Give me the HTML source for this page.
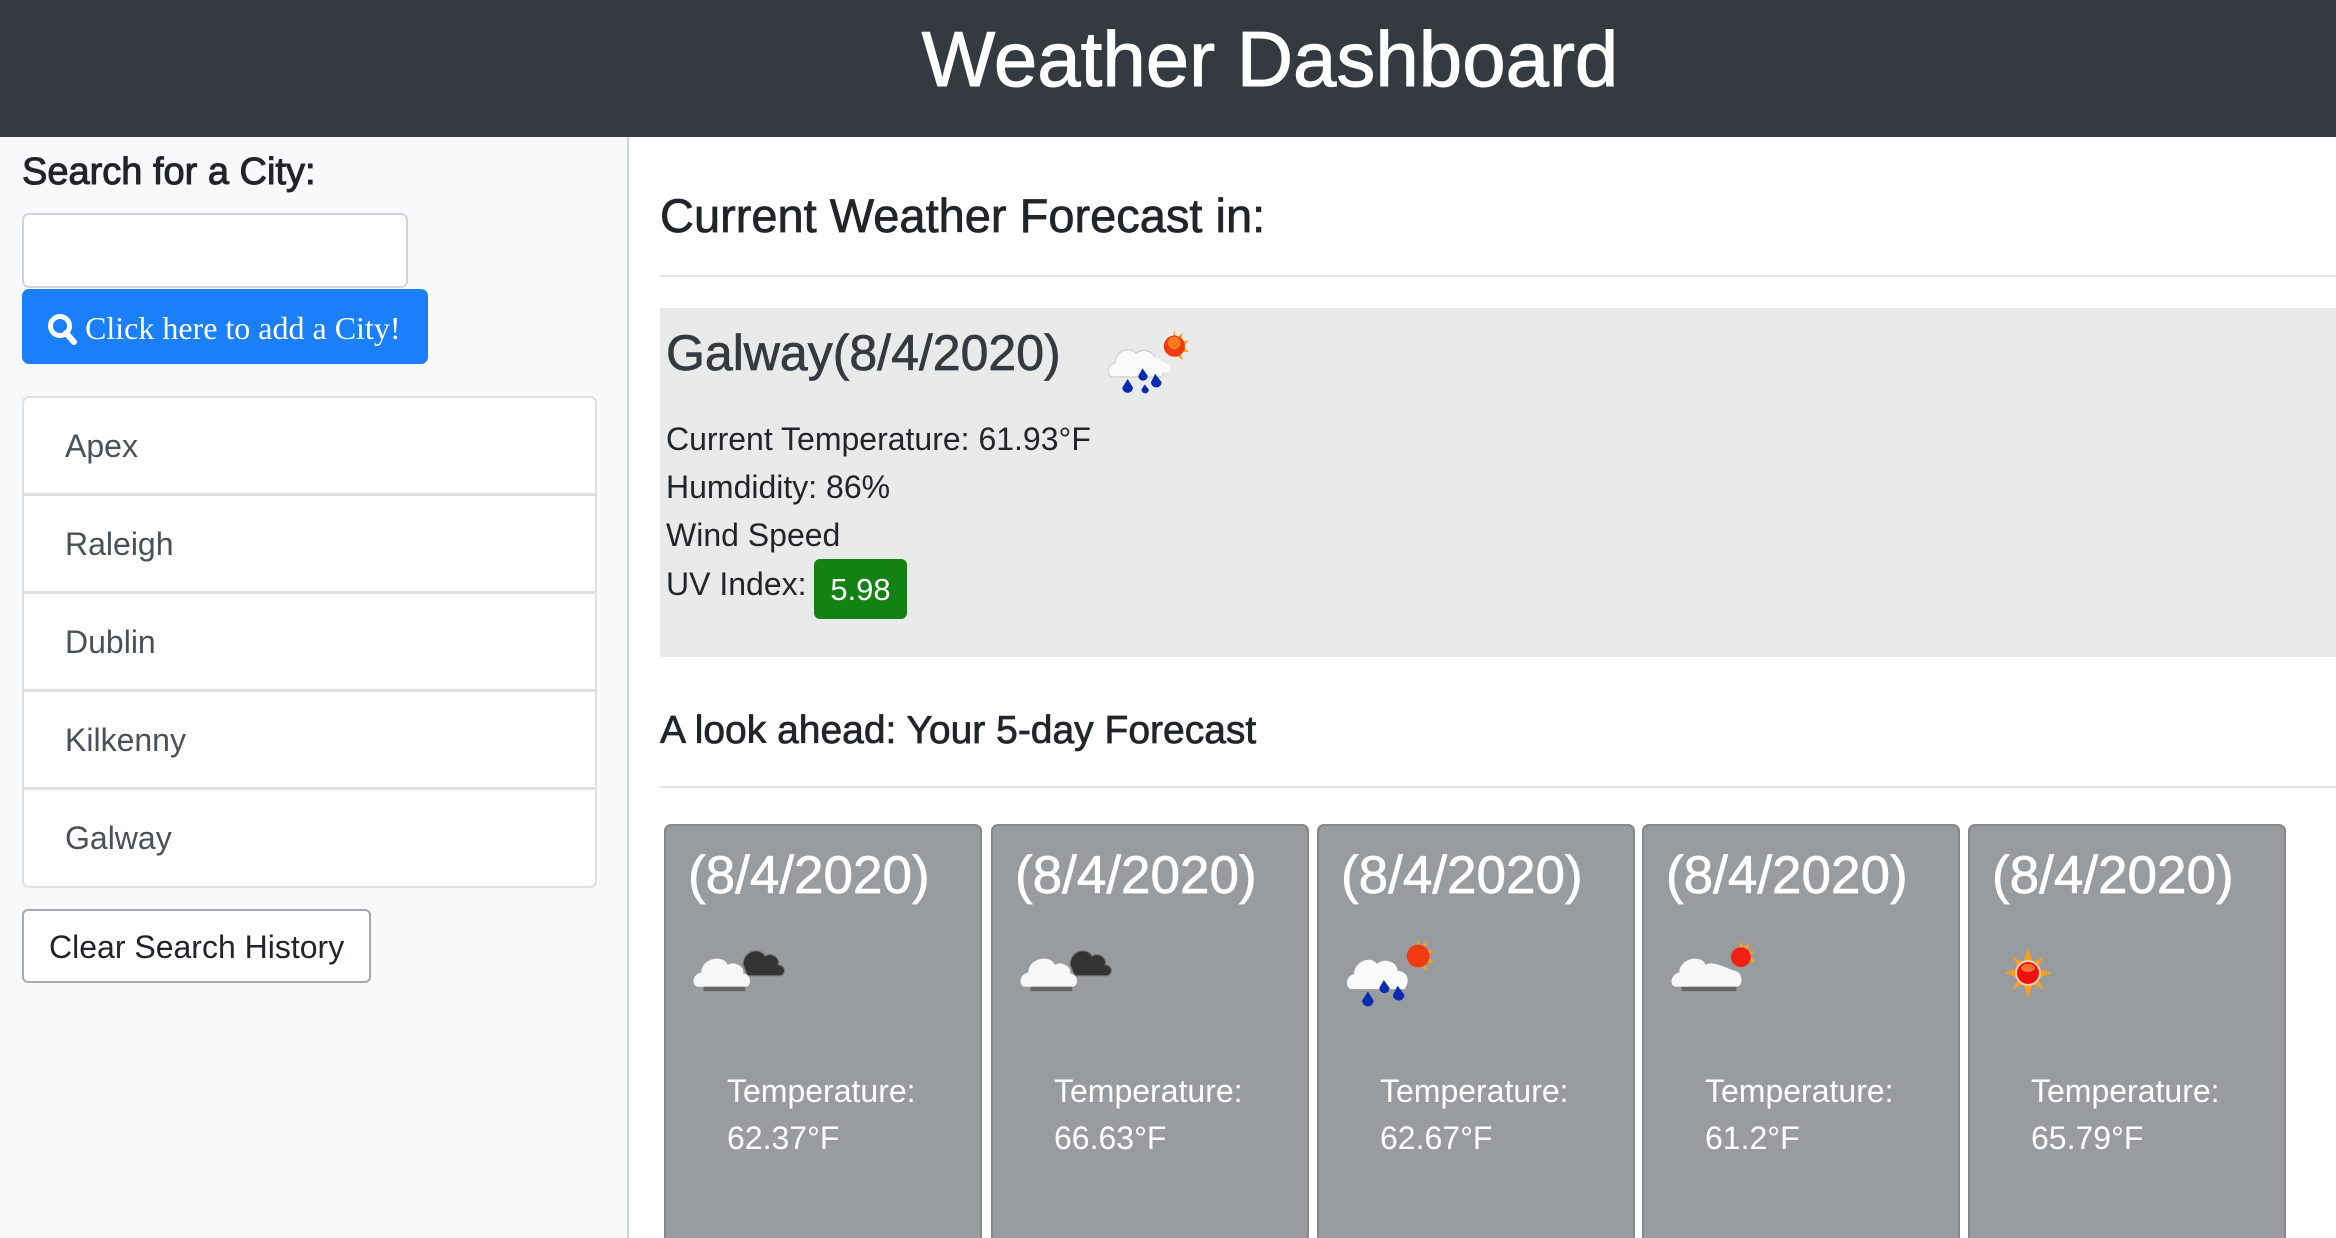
<!DOCTYPE html>
<html style="overflow:hidden;width:2336px;height:1238px"><head><meta charset="utf-8"><style>
*{box-sizing:border-box;margin:0;padding:0}
body{width:2336px;height:1238px;overflow:hidden;background:#fff;font-family:"Liberation Sans",sans-serif;color:#212529;position:relative}
.a{position:absolute;white-space:nowrap}
.m{-webkit-text-stroke:0.7px currentColor}
#hdr{left:0;top:0;width:2336px;height:137px;background:#343a40}
#side{left:0;top:137px;width:629px;height:1101px;background:#f8f9fa;border-right:2px solid #d0d2d4}
.li{position:absolute;left:22px;width:575px;height:99px;background:#fff;border:2px solid #dfe0e1;font-size:32px;color:#495057;padding-left:41px;line-height:97px}
.card{position:absolute;top:824px;width:318px;height:420px;background:#999c9f;border:2px solid #85888b;border-radius:7px;color:#fff}
.card .d{position:absolute;left:22px;top:19px;font-size:53px}
.card .i{position:absolute;left:26px;top:108px}
.card .t{position:absolute;left:61px;top:242px;font-size:32px;line-height:47px}
</style></head><body>
<div id="hdr" class="a"></div>
<div class="a m" style="left:0;width:2540px;top:14px;text-align:center;font-size:78px;color:#fff;-webkit-text-stroke:1px #fff">Weather Dashboard</div>
<div id="side" class="a"></div>
<div class="a m" style="left:22px;top:151px;font-size:38px;color:#212529;-webkit-text-stroke:1px #212529">Search for a City:</div>
<div class="a" style="left:22px;top:213px;width:386px;height:75px;background:#fff;border:2px solid #ced4da;border-radius:7px"></div>
<div class="a" style="left:22px;top:289px;width:406px;height:75px;background:#1a7ff8;border-radius:7px"></div>
<svg class="a" style="left:47px;top:313px" width="30" height="34" viewBox="0 0 30 34"><circle cx="13" cy="13" r="9.5" fill="none" stroke="#fff" stroke-width="5"/><path d="M19 20 L27 29" stroke="#fff" stroke-width="6" stroke-linecap="round"/></svg>
<div class="a" style="left:85px;top:310px;font-family:'Liberation Serif',serif;font-size:32px;color:#fff">Click here to add a City!</div>
<div class="li" style="top:396px;border-radius:7px 7px 0 0">Apex</div>
<div class="li" style="top:494px">Raleigh</div>
<div class="li" style="top:592px">Dublin</div>
<div class="li" style="top:690px">Kilkenny</div>
<div class="li" style="top:788px;border-radius:0 0 7px 7px;height:100px">Galway</div>
<div class="a" style="left:22px;top:909px;width:349px;height:74px;background:#fff;border:2px solid #a8abae;border-radius:6px;font-size:32px;line-height:72px;padding-left:25px">Clear Search History</div>

<div class="a m" style="left:660px;top:188px;font-size:47px;color:#212529">Current Weather Forecast in:</div>
<div class="a" style="left:660px;top:275px;width:1676px;height:2px;background:#e3e4e5"></div>
<div class="a" style="left:660px;top:308px;width:1676px;height:349px;background:#e9eaea"></div>
<div class="a m" style="left:666px;top:324px;font-size:50px;color:#343a40">Galway(8/4/2020)</div>
<svg class="a" style="left:1106px;top:326px" width="90" height="70" viewBox="0 0 84 66">
<g><path d="M64 4 L66 12 L72 6 L70 14 L78 14 L71 19 L78 24 L70 25 L72 32 L60 24Z" fill="#f8a020"/><circle cx="64" cy="19" r="10" fill="#f23a10"/><circle cx="64" cy="16" r="6" fill="#f87a20"/></g>
<path d="M6 48 C0 48 0 36 8 35 C8 24 22 18 28 26 C34 20 46 24 46 32 C54 32 58 40 52 48Z" fill="#fafafa" stroke="#ccc"/>
<path d="M36 44 C30 44 30 34 38 34 C40 28 50 28 52 34 C60 34 62 44 56 44Z" fill="#fafafa"/>
<g fill="#0a2bb0"><path d="M20 50 l-5 8 a5 5 0 1 0 10 0z"/><path d="M34 40 l-4 7 a4.5 4.5 0 1 0 9 0z"/><path d="M46 45 l-4 8 a5 5 0 1 0 10 0z"/><path d="M36 55 l-3 5 a3.5 3.5 0 1 0 7 0z"/></g>
</svg>
<div class="a" style="left:666px;top:415px;font-size:32px;line-height:48px;color:#212529">Current Temperature: 61.93°F<br>Humdidity: 86%<br>Wind Speed</div>
<div class="a" style="left:666px;top:566px;font-size:32px;color:#212529">UV Index:</div>
<div class="a" style="left:814px;top:559px;width:93px;height:60px;background:#138113;border-radius:6px;color:#fff;font-size:31px;text-align:center;line-height:62px">5.98</div>
<div class="a m" style="left:660px;top:709px;font-size:39px;color:#212529">A look ahead: Your 5-day Forecast</div>
<div class="a" style="left:660px;top:786px;width:1676px;height:2px;background:#e3e4e5"></div>

<div class="card" style="left:664px"><div class="d m">(8/4/2020)</div>
<svg class="i" width="100" height="66" viewBox="0 0 90 60"><path d="M46 28 C46 14 62 12 66 20 C72 16 80 22 78 28 C84 28 86 36 80 38 L50 38Z" fill="#333" stroke="#777"/><path d="M6 48 C-2 48 0 36 8 35 C8 22 28 18 32 28 C38 24 48 30 46 36 C54 36 54 48 48 48Z" fill="#f7f7f7"/><rect x="10" y="48" width="38" height="4" fill="#666"/></svg>
<div class="t">Temperature:<br>62.37°F</div></div>
<div class="card" style="left:991px"><div class="d m">(8/4/2020)</div>
<svg class="i" width="100" height="66" viewBox="0 0 90 60"><path d="M46 28 C46 14 62 12 66 20 C72 16 80 22 78 28 C84 28 86 36 80 38 L50 38Z" fill="#333" stroke="#777"/><path d="M6 48 C-2 48 0 36 8 35 C8 22 28 18 32 28 C38 24 48 30 46 36 C54 36 54 48 48 48Z" fill="#f7f7f7"/><rect x="10" y="48" width="38" height="4" fill="#666"/></svg>
<div class="t">Temperature:<br>66.63°F</div></div>
<div class="card" style="left:1317px"><div class="d m">(8/4/2020)</div>
<svg class="i" width="96" height="76" viewBox="0 0 84 66"><path d="M64 4 L66 12 L72 6 L70 14 L78 14 L71 19 L78 24 L70 25 L72 32 L60 24Z" fill="#f8a020"/><circle cx="64" cy="19" r="10" fill="#f23a10"/><path d="M6 48 C0 48 0 36 8 35 C8 24 22 18 28 26 C34 20 46 24 46 32 C54 32 58 40 52 48Z" fill="#fafafa"/><g fill="#0a2bb0"><path d="M20 50 l-5 8 a5 5 0 1 0 10 0z"/><path d="M34 40 l-4 7 a4.5 4.5 0 1 0 9 0z"/><path d="M46 45 l-4 8 a5 5 0 1 0 10 0z"/></g></svg>
<div class="t">Temperature:<br>62.67°F</div></div>
<div class="card" style="left:1642px"><div class="d m">(8/4/2020)</div>
<svg class="i" width="100" height="66" viewBox="0 0 90 60"><path d="M64 6 L66 13 L72 8 L70 15 L77 16 L71 20 L77 25 L70 26 L60 26Z" fill="#f8a020"/><circle cx="64" cy="21" r="9" fill="#f22010"/><path d="M6 48 C-2 48 0 36 8 35 C8 22 28 18 32 28 C38 24 48 30 60 34 C66 36 66 48 60 48Z" fill="#f7f7f7"/><rect x="10" y="48" width="50" height="4" fill="#666"/></svg>
<div class="t">Temperature:<br>61.2°F</div></div>
<div class="card" style="left:1968px"><div class="d m">(8/4/2020)</div>
<svg class="i" style="left:36px;top:116px" width="90" height="60" viewBox="0 0 90 60"><g fill="#f8a020"><path d="M22 6 L26 18 L18 18Z"/><path d="M22 56 L26 44 L18 44Z"/><path d="M-2 31 L10 27 L10 35Z"/><path d="M46 31 L34 27 L34 35Z"/><path d="M6 14 L16 20 L12 24Z"/><path d="M38 14 L28 20 L32 24Z"/><path d="M6 48 L16 42 L12 38Z"/><path d="M38 48 L28 42 L32 38Z"/></g><circle cx="22" cy="31" r="13" fill="#f8d0a0"/><circle cx="22" cy="31" r="11" fill="#f01010"/><ellipse cx="22" cy="26" rx="7" ry="4" fill="#f87030"/></svg>
<div class="t">Temperature:<br>65.79°F</div></div>
</body></html>
